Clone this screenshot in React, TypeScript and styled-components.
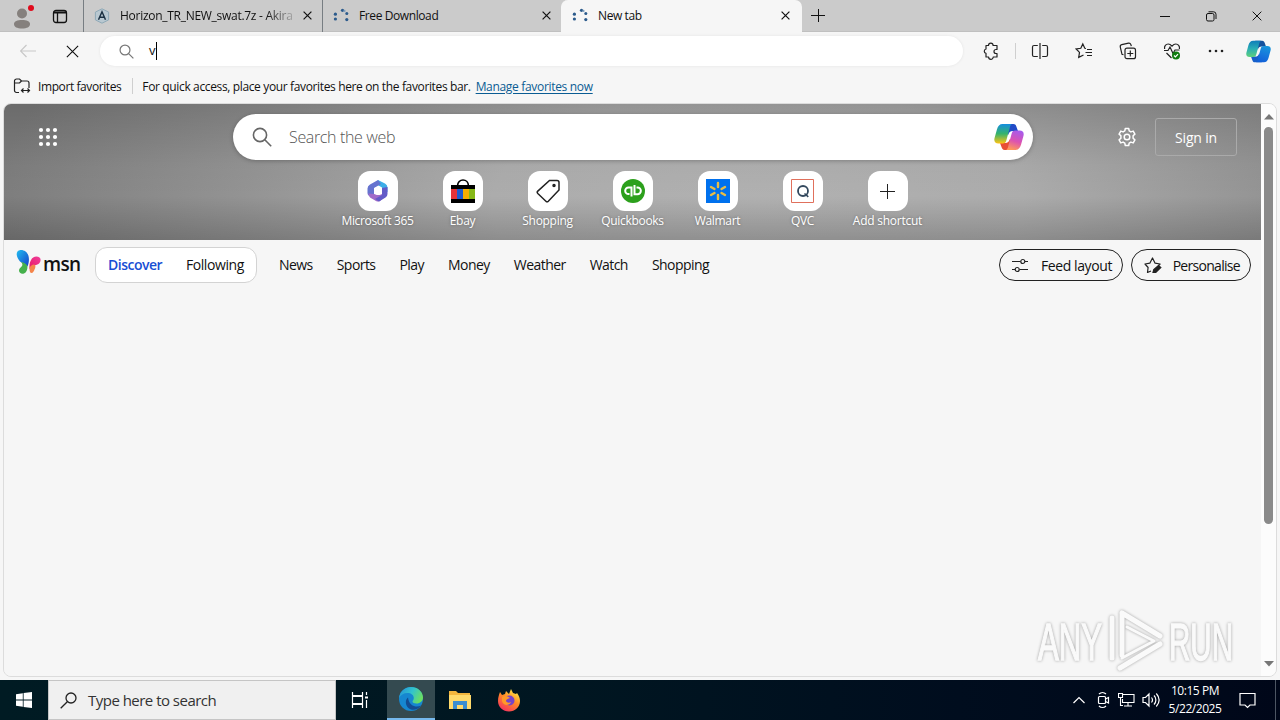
import React from 'react';
import styled, { createGlobalStyle } from 'styled-components';

const GlobalStyle = createGlobalStyle`
  * { box-sizing: border-box; }
  body {
    margin: 0;
    overflow: hidden;
    font-family: "Open Sans", "Noto Sans", sans-serif;
    font-size: 12px;
    color: #111;
  }
  svg { display: block; flex: none; }
`;

const Desktop = styled.div`
  width: 1280px;
  height: 720px;
  display: flex;
  flex-direction: column;
  background: #f6f6f6;
  overflow: hidden;
`;

/* text whose tracking varies with the place it is used in */
const Label = styled.span<{ $track?: number }>`
  white-space: nowrap;
  letter-spacing: ${p => p.$track ?? 0}px;
`;

const TabStrip = styled.div`
  height: 32px;
  flex: none;
  display: flex;
  background: #cbcbcb;
  box-shadow: inset 0 -1px 0 #c0c0c0;
`;

const StripTools = styled.div`
  width: 83px;
  display: flex;
  align-items: center;
  padding: 0 15px 1px 10px;
  justify-content: space-between;
`;

const TabBox = styled.div<{ $active?: boolean; $width: number }>`
  width: ${p => p.$width}px;
  display: flex;
  align-items: center;
  padding: 0 ${p => (p.$active ? 12 : 10)}px 1px 10px;
  background: ${p => (p.$active ? '#f6f6f6' : 'transparent')};
  border-left: 1px solid ${p => (p.$active ? '#f6f6f6' : '#777d82')};
  border-radius: ${p => (p.$active ? '7px 7px 0 0' : '0')};
`;

const TabTitle = styled(Label)<{ $fade?: boolean }>`
  flex: 1;
  min-width: 0;
  margin: 0 9px 0 10px;
  overflow: hidden;
  ${p => p.$fade && 'mask-image: linear-gradient(90deg, #000 84%, rgba(0, 0, 0, .25) 98%);'}
`;

const NewTab = styled.div`
  width: 32px;
  display: grid;
  place-items: center;
`;

const WindowButtons = styled.div`
  margin-left: auto;
  display: grid;
  grid-template-columns: repeat(3, 46px);
  place-items: center;
`;

const Toolbar = styled.div`
  height: 40px;
  flex: none;
  display: flex;
  align-items: center;
  padding: 0 0 2px 16px;
`;

const NavButton = styled.div`
  width: 24px;
  flex: none;
  margin-right: 20px;
  display: grid;
  place-items: center;
`;

const AddressBar = styled.div`
  width: 863px;
  height: 30px;
  flex: none;
  margin-left: -4px;
  display: flex;
  align-items: center;
  padding-left: 19px;
  background: #fff;
  border-radius: 15px;
  box-shadow: 0 0 2px 1px #ededed;
`;

const Typed = styled.span`
  margin-left: 15px;
  height: 18px;
  line-height: 17px;
  font-size: 13px;
  border-right: 1px solid #000;
`;

const ToolIcons = styled.div`
  display: flex;
  align-items: center;
  margin-left: 16px;
`;

const ToolSlot = styled.div<{ $width?: number; $after?: number }>`
  width: ${p => p.$width ?? 44}px;
  flex: none;
  margin-right: ${p => p.$after ?? 0}px;
  display: grid;
  place-items: center;
`;

const Divider = styled.div<{ $height: number }>`
  width: 1px;
  height: ${p => p.$height}px;
  background: #cfcfcf;
`;

const FavoritesBar = styled.div`
  height: 31px;
  flex: none;
  display: flex;
  align-items: center;
  padding: 0 13px 3px;
`;

const ImportLabel = styled(Label)`
  margin: 0 11px 0 7px;
`;

const FavoritesHint = styled(Label)`
  margin-left: 9px;
`;

const FavoritesLink = styled(Label)`
  color: #0a5c93;
  margin-left: 5px;
  text-decoration: underline;
  text-underline-offset: 2px;
`;

const PageFrame = styled.div`
  margin: 0 3px;
  height: 574px;
  flex: none;
  display: flex;
  border: 1px solid #dcdcdc;
  border-radius: 8px;
  overflow: hidden;
  position: relative;
`;

const Page = styled.div`
  width: 1257px;
  background: #f6f6f6;
`;

const ScrollTrack = styled.div`
  flex: 1;
  display: flex;
  flex-direction: column;
  align-items: center;
  padding: 9px 0 9px;
  background: #fcfcfc;
`;

const ScrollThumb = styled.div`
  width: 9px;
  height: 397px;
  margin: 7px 0 auto;
  border-radius: 5px;
  background: #8a8a8a;
`;

const Hero = styled.div`
  height: 136px;
  background:
    linear-gradient(180deg, rgba(0, 0, 0, .14) 0, rgba(0, 0, 0, .02) 45%, rgba(0, 0, 0, 0) 68%, rgba(0, 0, 0, .18) 100%),
    radial-gradient(ellipse 760px 330px at 60% 74%, #b1b1b1 0, #acacac 35%, #939393 68%, #7d7d7d 100%);
`;

const HeroTop = styled.div`
  height: 56px;
  display: flex;
  align-items: center;
  padding: 10px 24px 0 34px;
`;

const SearchBox = styled.div`
  width: 800px;
  height: 46px;
  margin-left: 175px;
  display: flex;
  align-items: center;
  padding: 0 9px 0 19px;
  border-radius: 23px;
  background: #fff;
  box-shadow: 0 1px 4px rgba(0, 0, 0, .25);
`;

const SearchHint = styled(Label)`
  flex: 1;
  margin-left: 17px;
  font-size: 16px;
  font-weight: 300;
  color: #555;
`;

const Settings = styled.div`
  margin-left: auto;
`;

const SignIn = styled.div`
  width: 82px;
  height: 38px;
  display: grid;
  place-items: center;
  margin-left: 18px;
  border: 1px solid #aaa;
  border-radius: 3px;
  color: #fff;
  font-size: 14px;
`;

const Shortcuts = styled.div`
  display: grid;
  grid-template-columns: repeat(7, 85px);
  padding: 11px 0 0 331px;
`;

const Shortcut = styled.div`
  display: flex;
  flex-direction: column;
  align-items: center;
  gap: 1px;
  color: #fff;
  text-shadow: 0 0 3px rgba(0, 0, 0, .35);
`;

const ShortcutTile = styled.div`
  width: 40px;
  height: 40px;
  display: grid;
  place-items: center;
  border-radius: 12px;
  background: #fff;
`;

const FeedNav = styled.div`
  height: 50px;
  display: flex;
  align-items: center;
  padding: 0 10px 0 12px;
  font-size: 14px;
`;

const MsnLogo = styled.div`
  width: 79px;
  display: flex;
  align-items: center;
  padding-bottom: 6px;
`;

const MsnName = styled.span`
  padding-top: 3px;
  margin-left: 1px;
  font-size: 19px;
  font-weight: 600;
  line-height: 24px;
  letter-spacing: -.7px;
`;

const FeedSwitch = styled.div`
  width: 162px;
  height: 36px;
  display: flex;
  align-items: center;
  justify-content: space-between;
  padding: 0 12px 1px;
  background: #fff;
  border: 1px solid #d3d3d3;
  border-radius: 12px;
`;

const ActiveFeed = styled(Label)`
  color: #174ed4;
  font-weight: 600;
`;

const Topics = styled.div`
  display: flex;
  flex: 1;
  gap: 24px;
  padding: 0 0 1px 22px;
`;

const PillButton = styled.div<{ $width: number }>`
  width: ${p => p.$width}px;
  height: 32px;
  margin-left: 8px;
  padding: 0 10px 0 12px;
  display: flex;
  align-items: center;
  justify-content: space-between;
  border: 1px solid #222;
  border-radius: 16px;
`;

const Watermark = styled.svg`
  position: absolute;
  left: 1028px;
  top: 499px;
  filter: drop-shadow(0 0 1.5px rgba(0, 0, 0, .35));
`;

const Taskbar = styled.div`
  height: 40px;
  margin-top: auto;
  flex: none;
  display: flex;
  align-items: stretch;
  background: linear-gradient(90deg, #001b23 0, #001621 45%, #000d1e 75%, #000719 100%);
  color: #fff;
`;

const TaskButton = styled.div<{ $active?: boolean; $width?: number; $shift?: number }>`
  width: ${p => p.$width ?? 49}px;
  display: grid;
  place-items: center;
  padding-right: ${p => p.$shift ?? 0}px;
  background: ${p => (p.$active ? '#344a50' : 'transparent')};
  border-bottom: ${p => (p.$active ? '2px solid #76b9ed' : '0')};
`;

const TaskSearch = styled.div`
  width: 288px;
  display: flex;
  align-items: center;
  gap: 11px;
  padding-left: 11px;
  background: #f0f0f0;
  border: 1px solid #c5c5c5;
  color: #333;
  font-size: 15px;
`;

const Tray = styled.div`
  display: flex;
  align-items: center;
  margin-left: auto;
`;

const Clock = styled.div`
  width: 64px;
  display: flex;
  flex-direction: column;
  align-items: center;
  line-height: 18px;
  padding-bottom: 1px;
`;

const ShowDesktop = styled.div`
  width: 5px;
  height: 40px;
  border-left: 1px solid #4d5663;
`;

interface CrossProps {
  size: number;
  width?: number;
}

const Cross = ({ size, width = 1.2 }: CrossProps) => (
  <svg width={size} height={size} viewBox="0 0 12 12" fill="none" stroke="#111" strokeWidth={width * 12 / size}>
    <path d="M.8.8l10.4 10.4M11.2.8L.8 11.2" />
  </svg>
);

const Magnifier = ({ size, color }: { size: number; color: string }) => (
  <svg width={size} height={size} viewBox="0 0 20 20" fill="none" stroke={color} strokeWidth="1.6">
    <circle cx="8" cy="8" r="6.6" />
    <path d="M12.8 12.8l6.4 6.4" />
  </svg>
);

const Dots = () => (
  <svg width="16" height="16" fill="#2c5b8c">
    <circle cx="2.400" cy="6.200" r="1.600" /><circle cx="2.400" cy="11" r="1.600" />
    <circle cx="9.500" cy="2.300" r="1.600" /><circle cx="11.500" cy="2.900" r="1.100" fill="#7d9dbd" />
    <circle cx="13.800" cy="5.500" r="1.500" /><circle cx="13.800" cy="11.600" r="1.600" />
  </svg>
);

const AnyFavicon = () => (
  <svg width="16" height="16" fill="none">
    <path d="M8 .8l6.600 3.300v7.800L8 15.200l-6.600-3.300V4.100z" fill="#b9c8d1" stroke="#8fa9b7" />
    <path d="M4.500 11.800L8 3.800l3.500 8M5.800 9.200h4.400" stroke="#1d3244" strokeWidth="1.500" />
  </svg>
);

const Profile = () => (
  <svg width="24" height="26">
    <circle cx="12" cy="10.500" r="5" fill="#85807d" />
    <path d="M4 21c0-2.800 3.400-4 8-4s8 1.200 8 4c0 3-3 4.500-8 4.500s-8-1.500-8-4.500z" fill="#85807d" />
    <circle cx="21" cy="5" r="3" fill="#e00b1c" />
  </svg>
);

const Workspace = () => (
  <svg width="16" height="16" fill="none" stroke="#111" strokeWidth="1.300">
    <rect x="1.500" y="2.500" width="13" height="12" rx="2.500" />
    <path d="M1.500 4.500h13" strokeWidth="2" />
    <path d="M5.500 5v9.500" />
  </svg>
);

const CopilotMark = ({ id, size, colors }: { id: string; size: number; colors: string[] }) => (
  <svg width={size} height={size} viewBox="0 0 30 30">
    <defs>
      <linearGradient id={`${id}l`} x1="0" y1="0" x2="0" y2="1">
        <stop offset="0" stopColor={colors[0]} />
        <stop offset=".5" stopColor={colors[1]} />
        <stop offset="1" stopColor={colors[2]} />
      </linearGradient>
      <linearGradient id={`${id}r`} x1=".7" y1="0" x2=".4" y2="1">
        <stop offset="0" stopColor={colors[3]} />
        <stop offset=".55" stopColor={colors[4]} />
        <stop offset="1" stopColor={colors[5]} />
      </linearGradient>
    </defs>
    <path d="M11 2h8.300c2 0 2.700 1.200 3.300 3.200L24 9h-5c-3 0-4 1.300-4.800 4z" fill={colors[6]} />
    <path d="M19 28h-8.300c-2 0-2.700-1.200-3.300-3.200L6 21h5c3 0 4-1.300 4.800-4z" fill={colors[7]} />
    <path d="M18 2H8.600C5.500 2 4 4 3 7.200L.7 15.500C-.5 19.300 1 21.500 4.300 21.500h4.500c2 0 3-1.100 3.600-3.200L15.700 6c.5-2 1-3.500 2.300-4z" fill={`url(#${id}l)`} />
    <path d="M12 28h9.400c3.100 0 4.600-2 5.600-5.200l2.300-8.300C30.500 10.700 29 8.500 25.700 8.500h-4.500c-2 0-3 1.100-3.600 3.200L14.300 24c-.5 2-1 3.500-2.300 4z" fill={`url(#${id}r)`} />
  </svg>
);

const toolIcons = [
  <svg key="split" width="18" height="18" fill="none" stroke="#222" strokeWidth="1.200">
    <path d="M6.800 3.500H3a1.500 1.500 0 00-1.500 1.500v8A1.500 1.500 0 003 14.500h3.800M11.200 3.500H15a1.500 1.500 0 011.500 1.500v8a1.500 1.500 0 01-1.500 1.500h-3.800M9 1v16" />
  </svg>,
  <svg key="star" width="18" height="18" fill="none" stroke="#222" strokeWidth="1.200">
    <path d="M11 6.500L9.800 6.300 7.800 2 5.800 6.300 1.200 7l3.300 3.400-.8 5L8.500 13M12 7.500h5M10.500 10.500H17M12 13.500h5" />
  </svg>,
  <svg key="collections" width="18" height="18" fill="none" stroke="#222" strokeWidth="1.200">
    <rect x="6" y="6.200" width="10.500" height="10.500" rx="2" />
    <path d="M11.300 8.500v6M8.300 11.500h6M4.500 12.800L3 12.300 1.300 5.200C1 3.800 1.600 3 2.800 2.700L9.500 1.200c1.300-.2 2 .3 2.400 1.400l.4 1.600" />
  </svg>,
  <svg key="heart" width="18" height="18" fill="none" stroke="#222" strokeWidth="1.200">
    <path d="M1.600 7C1 3.800 3 2 5.200 2 7 2 8 3 9 4.200 10 3 11 2 12.800 2 15 2 17 3.800 16.400 7M1 8.500h4L7 5l3 6.500L12 8h4.500M3.500 11L8.500 16" />
    <circle cx="13" cy="13.500" r="4" fill="#107c10" stroke="none" />
    <path d="M11 13.500l1.400 1.400 2.600-2.800" stroke="#fff" />
  </svg>,
  <svg key="more" width="18" height="18" fill="#222">
    <circle cx="3" cy="9" r="1.300" /><circle cx="9" cy="9" r="1.300" /><circle cx="15" cy="9" r="1.300" />
  </svg>,
];

const shortcuts: { name: string; track: number; icon: React.ReactNode }[] = [
  {
    name: 'Microsoft 365', track: -0.35, icon: (
      <svg width="24" height="24">
        <path d="M12 1l7 3.500q2.500 1.500 2.500 4V13L16 11V8.500L10 5z" fill="#3caee8" />
        <path d="M12 1L4 5.500Q1.500 7 1.500 9.500V14q0 2.500 3.500 4l3-2.500V9l7-4z" fill="#6573cf" />
        <path d="M2 14.500l6 .5 5 1 5-1.500 3 1.500-7 6q-2 1.200-4 0L4 18.500z" fill="#a06bc9" />
        <path d="M16 9l5.500-1v7q0 2-2 3.500L13 22.500l-4-2.500 7-4z" fill="#625bc8" />
        <circle cx="12" cy="12" r="4" fill="#fff" />
      </svg>
    ),
  },
  {
    name: 'Ebay', track: -0.3, icon: (
      <svg width="24" height="24">
        <path d="M6.500 7c0-8 11-8 11 0" fill="none" stroke="#000" strokeWidth="1.700" />
        <path d="M0 6h24v18H0z" />
        <path d="M0 10h6V20H0z" fill="#e53238" /><path d="M6 10h6V20H6z" fill="#1d5bd0" />
        <path d="M12 10h6V20h-6z" fill="#f5af02" /><path d="M18 10h6V20h-6z" fill="#86b817" />
      </svg>
    ),
  },
  {
    name: 'Shopping', track: -0.3, icon: (
      <svg width="24" height="24" fill="none" stroke="#222" strokeWidth="1.500">
        <path d="M13.500 1.500h7.500a2 2 0 012 2V11L12.300 22.200a1.700 1.700 0 01-2.400 0L1.800 14.500a1.700 1.700 0 010-2.400z" />
        <circle cx="18" cy="6.500" r="1" fill="#222" />
      </svg>
    ),
  },
  {
    name: 'Quickbooks', track: -0.3, icon: (
      <svg width="24" height="24" fill="none" stroke="#fff" strokeWidth="2">
        <circle cx="12" cy="12" r="12" fill="#2ca01c" stroke="none" />
        <path d="M10.500 17.500V8.500H7.500a3.300 3.300 0 000 6.600h1M13.500 6v9.200h3a3.300 3.300 0 000-6.700h-1" />
      </svg>
    ),
  },
  {
    name: 'Walmart', track: -0.3, icon: (
      <svg width="24" height="24" stroke="#e8bd45" strokeWidth="2.400" strokeLinecap="round">
        <path d="M0 0h24v24H0z" fill="#0071ee" stroke="none" />
        <path d="M12 4v4M12 16v4M5 8l3.500 2M15.500 14l3.500 2M5 16l3.500-2M15.500 10L19 8" />
      </svg>
    ),
  },
  {
    name: 'QVC', track: -0.3, icon: (
      <svg width="24" height="24" fill="none">
        <path d="M.5.500h22v23H.5z" stroke="#e0705c" />
        <circle cx="12" cy="12" r="5" stroke="#34495e" strokeWidth="1.800" />
        <path d="M13.500 14.500l3.800 3.300" stroke="#34495e" strokeWidth="1.600" />
      </svg>
    ),
  },
  {
    name: 'Add shortcut', track: -0.25, icon: (
      <svg width="24" height="24" stroke="#222" strokeWidth="1"><path d="M11.500 5v15M4 12.500h15" /></svg>
    ),
  },
];

const topics = ['News', 'Sports', 'Play', 'Money', 'Weather', 'Watch', 'Shopping'];

const Butterfly = () => (
  <svg width="26" height="26">
    <defs>
      <linearGradient id="wing" x1="0" y1="0" x2="1" y2="1">
        <stop offset="0" stopColor="#20bdf0" /><stop offset="1" stopColor="#1540c8" />
      </linearGradient>
      <linearGradient id="wingr" x1="1" y1="0" x2="0" y2="1">
        <stop offset="0" stopColor="#f0409b" /><stop offset="1" stopColor="#e81868" />
      </linearGradient>
    </defs>
    <path d="M1.500 2.500C4-.5 11 1 12.500 7c.8 3 .5 7-1 10.500-1-2.500-4.500-3-7.500-5C1.500 9.500-.5 5.500 1.500 2.500z" fill="url(#wing)" />
    <path d="M5 13c3 .5 6 2 6.500 4.500 0 3-1 6-3.500 7-2.500.8-5-.5-5-3 0-2.500 2-3 3-4.500.8-1.500.3-2.800-1-4z" fill="#45b04c" />
    <path d="M13.500 20c-.5-7 2-12.500 7-12.500 4.500 0 5 4 3 6.500-2.500 3-7 1.500-10 6z" fill="url(#wingr)" />
    <path d="M13.500 19c1-2.500 3.500-3.800 5-3.300 1.500 1 1 3 0 4.800-.5 1.500-1.500 3.500-3 3.500s-2-2-2-5z" fill="#f5854b" />
  </svg>
);

const Gear = () => (
  <svg width="20" height="20" viewBox="0 0 20 19" fill="none" stroke="#fff" strokeWidth="1.500">
    <path d="M8.300 1h3.400l.5 2.400 1.700 1 2.300-.8 1.700 3-1.800 1.700v2.400l1.800 1.700-1.700 3-2.300-.8-1.700 1-.5 2.400H8.300l-.5-2.400-1.700-1-2.300.8-1.700-3 1.800-1.700V8.300L2.100 6.600l1.700-3 2.300.8 1.700-1z" strokeLinejoin="round" />
    <circle cx="10" cy="9.500" r="2.800" />
  </svg>
);

const BrowserTabs = () => (
  <TabStrip>
    <StripTools><Profile /><Workspace /></StripTools>
    <TabBox $width={239}>
      <AnyFavicon />
      <TabTitle $track={-0.28} $fade>Horizon_TR_NEW_swat.7z - Akira</TabTitle>
      <Cross size={9} />
    </TabBox>
    <TabBox $width={239}>
      <Dots />
      <TabTitle $track={-0.4}>Free Download</TabTitle>
      <Cross size={9} />
    </TabBox>
    <TabBox $width={241} $active>
      <Dots />
      <TabTitle $track={-0.4}>New tab</TabTitle>
      <Cross size={9} />
    </TabBox>
    <NewTab>
      <svg width="14" height="14" stroke="#111" strokeWidth="1"><path d="M0 6.500h14M7.500 0v13" /></svg>
    </NewTab>
    <WindowButtons>
      <svg width="10" height="10" stroke="#111"><path d="M0 5.500h10" /></svg>
      <svg width="11" height="11" fill="none" stroke="#111">
        <rect x=".5" y="2.500" width="7.500" height="7.500" rx="1.500" />
        <path d="M2.500.8h5a2.500 2.500 0 012.500 2.500V8" />
      </svg>
      <Cross size={10} width={1} />
    </WindowButtons>
  </TabStrip>
);

const AddressRow = () => (
  <Toolbar>
    <NavButton>
      <svg width="17" height="14" fill="none" stroke="#c8c8c8" strokeWidth="1.200"><path d="M16 7H.5M6.500 1l-6 6 6 6" /></svg>
    </NavButton>
    <NavButton><Cross size={13} width={1.1} /></NavButton>
    <AddressBar>
      <Magnifier size={15} color="#777" />
      <Typed>v</Typed>
    </AddressBar>
    <ToolIcons>
      <ToolSlot $width={24}>
        <svg width="18" height="18" fill="none" stroke="#222" strokeWidth="1.200">
          <path d="M4 3.500h2.500a2.300 2.300 0 014.600 0H15v4h-1a2 2 0 000 4h1V15h-3.800a2.300 2.300 0 01-4.600 0H4v-3.700a2.200 2.200 0 010-4.300z" strokeLinejoin="round" />
        </svg>
      </ToolSlot>
      <ToolSlot $width={25}><Divider $height={16} /></ToolSlot>
      {toolIcons.map((icon, i) => (
        <ToolSlot key={i} $width={i === 0 ? 24 : 44} $after={i === 0 ? 10 : 0}>{icon}</ToolSlot>
      ))}
      <ToolSlot $width={40}>
        <CopilotMark
          id="edge"
          size={25}
          colors={['#0f7dba', '#2aaeb5', '#5ed07c', '#1795db', '#1677dc', '#1160d8', '#14519d', '#175fc9']}
        />
      </ToolSlot>
    </ToolIcons>
  </Toolbar>
);

const Favorites = () => (
  <FavoritesBar>
    <svg width="18" height="16" fill="none" stroke="#222" strokeWidth="1.200">
      <path d="M6 14.500H3.500a2 2 0 01-2-2V3a2 2 0 012-2h3l2 2H14a2 2 0 012 2v5M1.500 5h5l2-2M8.500 12.500h8M10.500 10.500l-2 2 2 2M14.500 10.500l2 2-2 2" />
    </svg>
    <ImportLabel $track={-0.41}>Import favorites</ImportLabel>
    <Divider $height={16} />
    <FavoritesHint $track={-0.36}>
      For quick access, place your favorites here on the favorites bar.
    </FavoritesHint>
    <FavoritesLink $track={-0.32}>Manage favorites now</FavoritesLink>
  </FavoritesBar>
);

const NewTabPage = () => (
  <PageFrame>
    <Page>
      <Hero>
        <HeroTop>
          <svg width="20" height="20" fill="#fff">
            {[3, 10, 17].map(y => [3, 10, 17].map(x => <circle key={`${x}-${y}`} cx={x} cy={y} r="2.100" />))}
          </svg>
          <SearchBox>
            <Magnifier size={20} color="#666" />
            <SearchHint $track={-0.35}>Search the web</SearchHint>
            <CopilotMark
              id="web"
              size={30}
              colors={['#148ee0', '#35b36b', '#ffc414', '#a65bed', '#dc52b1', '#ff975b', '#214bc7', '#e84e36']}
            />
          </SearchBox>
          <Settings><Gear /></Settings>
          <SignIn><Label $track={-0.2}>Sign in</Label></SignIn>
        </HeroTop>
        <Shortcuts>
          {shortcuts.map(s => (
            <Shortcut key={s.name}>
              <ShortcutTile>{s.icon}</ShortcutTile>
              <Label $track={s.track}>{s.name}</Label>
            </Shortcut>
          ))}
        </Shortcuts>
      </Hero>
      <FeedNav>
        <MsnLogo>
          <Butterfly />
          <MsnName>msn</MsnName>
        </MsnLogo>
        <FeedSwitch>
          <ActiveFeed $track={-0.5}>Discover</ActiveFeed>
          <Label $track={-0.4}>Following</Label>
        </FeedSwitch>
        <Topics>{topics.map(t => <Label key={t} $track={-0.55}>{t}</Label>)}</Topics>
        <PillButton $width={124}>
          <svg width="16" height="16" fill="none" stroke="#222" strokeWidth="1.200">
            <path d="M0 4.500h8.500M13 4.500h3M0 12.500h3M7.500 12.500H16" />
            <circle cx="10.800" cy="4.500" r="2" /><circle cx="5.200" cy="12.500" r="2" />
          </svg>
          <Label $track={-0.4}>Feed layout</Label>
        </PillButton>
        <PillButton $width={120}>
          <svg width="18" height="18" fill="none" stroke="#222" strokeWidth="1.200">
            <path d="M7 15l-3.500 1.500.6-5L1 8l4.800-.8L8.500 2l2.600 5.200 5 .8-2 2" strokeLinejoin="round" />
            <path d="M9 16.500l.8-3L14.500 9.500l2.300 2-5 5z" fill="#222" />
          </svg>
          <Label $track={-0.7}>Personalise</Label>
        </PillButton>
      </FeedNav>
    </Page>
    <ScrollTrack>
      <svg width="10" height="7" fill="#777"><path d="M5 1l5 5.500H0z" /></svg>
      <ScrollThumb />
      <svg width="10" height="7" fill="#777"><path d="M5 6.500L0 1h10z" /></svg>
    </ScrollTrack>
    <Watermark width="236" height="73">
      <g transform="scale(1 2)" fill="#fafafa" stroke="#fafafa" strokeWidth=".7" fontFamily="Liberation Sans Narrow, Liberation Sans, sans-serif" fontSize="26">
        <text x="6" y="28.500" textLength="64" lengthAdjust="spacingAndGlyphs">ANY</text>
        <text x="137" y="28.500" textLength="64" lengthAdjust="spacingAndGlyphs">RUN</text>
      </g>
      <g fill="none" stroke="#fafafa" strokeLinejoin="round" strokeLinecap="round">
        <path d="M80 15v40M90 10l38 23M90 10v42M88 65l40-24" strokeWidth="5" />
        <path d="M95 24l27 14-32 17" strokeWidth="3" />
      </g>
    </Watermark>
  </PageFrame>
);

const WindowsTaskbar = () => (
  <Taskbar>
    <TaskButton $width={48}>
      <svg width="16" height="16" fill="#fff"><path d="M0 2.200L6.800 1.200V7.600H0zM7.600 1.100L16 0v7.600H7.600zM0 8.400h6.800v6.400L0 13.800zM7.600 8.400H16V16l-8.400-1.100z" /></svg>
    </TaskButton>
    <TaskSearch>
      <svg width="17" height="17" fill="none" stroke="#222" strokeWidth="1.300"><circle cx="11" cy="6" r="5" /><path d="M7.300 9.700L.7 16.300" /></svg>
      <Label $track={-0.52}>Type here to search</Label>
    </TaskSearch>
    <TaskButton $width={51} $shift={4}>
      <svg width="18" height="18" fill="none" stroke="#fff" strokeWidth="1.200">
        <path d="M1.500 1v3.500h10V1M1.500 17v-3.500h10V17M1.500 5.500h10v7h-10zM15.500 1v3M15.500 9v8" /><path d="M14 5.500h3v2h-3z" fill="#fff" stroke="none" />
      </svg>
    </TaskButton>
    <TaskButton $width={48} $active>
      <svg width="24" height="24">
        <defs>
          <linearGradient id="sea" x1="0" y1=".2" x2="1" y2=".6">
            <stop offset="0" stopColor="#2493d7" /><stop offset=".5" stopColor="#32c3cd" /><stop offset="1" stopColor="#6ee05c" />
          </linearGradient>
        </defs>
        <circle cx="12" cy="12" r="12" fill="#1687d0" />
        <path d="M0 11C1 4 6 0 12 0c7 0 12 5 12 10.500 0 3.500-3 6-6.500 6-2.500 0-4-1-4-2 0-1 1.300-1.500 1.300-3.500C14.800 8 12 6 8.500 6 4.500 6 1.500 8 0 11z" fill="url(#sea)" />
        <path d="M9 10.500c-3 2-3 8 1 11 3.500 2.500 9 1.500 12-3-4 2.500-12 1-13-8z" fill="#134c91" />
      </svg>
    </TaskButton>
    <TaskButton>
      <svg width="22" height="20">
        <path d="M0 1h7l2 2h12v16H0z" fill="#f3b63d" /><path d="M0 5h22v14H0z" fill="#ffda6b" />
        <path d="M4 19v-8h14v8h-4v-4H8v4z" fill="#3b8ed0" />
      </svg>
    </TaskButton>
    <TaskButton>
      <svg width="24" height="24">
        <defs>
          <linearGradient id="fox" x1=".8" y1="0" x2=".2" y2="1">
            <stop offset="0" stopColor="#fff14a" /><stop offset=".45" stopColor="#ff8b26" /><stop offset="1" stopColor="#f52b62" />
          </linearGradient>
        </defs>
        <path d="M3 4l2 3 3-1 1-3 3 3 2-5 2 4 3 1 1-1c2 3 3 5 3 8 0 6-5 10.500-11 10.500S1 19 1 13c0-4 1-6 2-9z" fill="url(#fox)" />
        <circle cx="12.500" cy="12.500" r="5" fill="#7544c9" />
        <path d="M5 9c3-2 6-.5 8 1-2 1-3 1-4 2.500 0 2 3 3 5 1.500-1 4-8 4-9-1z" fill="#ff9928" />
      </svg>
    </TaskButton>
    <Tray>
      <ToolSlot $width={25}>
        <svg width="12" height="8" fill="none" stroke="#fff" strokeWidth="1.200"><path d="M.5 7L6 1.500 11.500 7" /></svg>
      </ToolSlot>
      <ToolSlot $width={23}>
        <svg width="14" height="18" fill="none" stroke="#fff" strokeWidth="1.200">
          <rect x="2.500" y="5.500" width="7" height="7" rx="1" /><path d="M9.500 8l3-1.500v5.500l-3-1.500M3 3c2-2 5-2 7 0M3 15c2 2 5 2 7 0" />
        </svg>
      </ToolSlot>
      <ToolSlot $width={25}>
        <svg width="17" height="16" fill="none" stroke="#fff" strokeWidth="1.100">
          <path d="M5 2.500h11v8H4.500V7M10 10.500v3M6 14h8M.5 1.500h4v4h-4zM2.500 5.500v8H5" />
        </svg>
      </ToolSlot>
      <ToolSlot $width={24}>
        <svg width="18" height="16" fill="none" stroke="#fff" strokeWidth="1.200">
          <path d="M1 5.500h2.500L7 2v12l-3.500-3.500H1zM9.500 5.500c1.200 1.500 1.200 3.500 0 5M12 3.500c2.500 2.500 2.500 6.500 0 9M14.300 1.500c3.500 4 3.500 9 0 13" />
        </svg>
      </ToolSlot>
      <Clock>
        <Label $track={-0.45}>10:15 PM</Label>
        <Label $track={-0.45}>5/22/2025</Label>
      </Clock>
      <ToolSlot $width={40} $after={8}>
        <svg width="17" height="17" fill="none" stroke="#fff" strokeWidth="1.200"><path d="M1 1.500h15v11.500h-5L8.500 15.500 6 13H1z" /></svg>
      </ToolSlot>
      <ShowDesktop />
    </Tray>
  </Taskbar>
);

export default function App() {
  return (
    <Desktop>
      <GlobalStyle />
      <BrowserTabs />
      <AddressRow />
      <Favorites />
      <NewTabPage />
      <WindowsTaskbar />
    </Desktop>
  );
}
